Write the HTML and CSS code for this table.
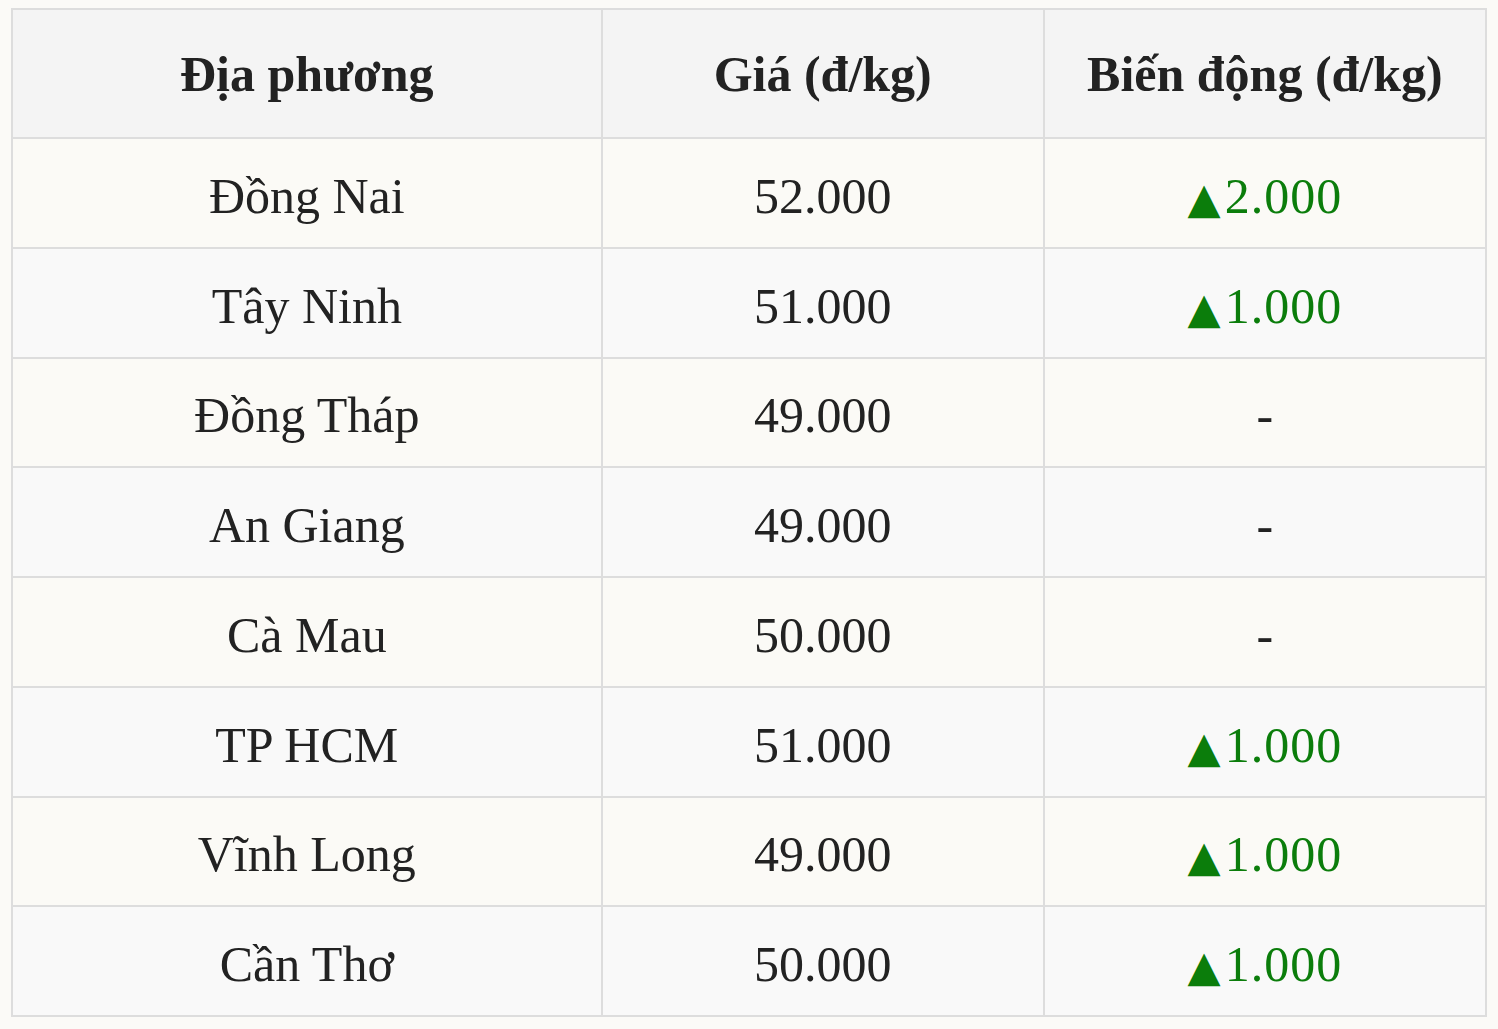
FILE: index.html
```html
<!DOCTYPE html>
<html lang="vi">
<head>
<meta charset="utf-8">
<title>Giá</title>
<link rel="stylesheet" href="styles.css">
</head>
<body>
<table class="price-table">
  <colgroup>
    <col class="col-place">
    <col class="col-price">
    <col class="col-change">
  </colgroup>
  <thead>
    <tr><th>Địa phương</th><th>Giá (đ/kg)</th><th>Biến động (đ/kg)</th></tr>
  </thead>
  <tbody>
    <tr><td>Đồng Nai</td><td>52.000</td><td class="up"><span class="arrow">▲</span>2.000</td></tr>
    <tr><td>Tây Ninh</td><td>51.000</td><td class="up"><span class="arrow">▲</span>1.000</td></tr>
    <tr><td>Đồng Tháp</td><td>49.000</td><td>-</td></tr>
    <tr><td>An Giang</td><td>49.000</td><td>-</td></tr>
    <tr><td>Cà Mau</td><td>50.000</td><td>-</td></tr>
    <tr><td>TP HCM</td><td>51.000</td><td class="up"><span class="arrow">▲</span>1.000</td></tr>
    <tr><td>Vĩnh Long</td><td>49.000</td><td class="up"><span class="arrow">▲</span>1.000</td></tr>
    <tr><td>Cần Thơ</td><td>50.000</td><td class="up"><span class="arrow">▲</span>1.000</td></tr>
  </tbody>
</table>
</body>
</html>
```
FILE: styles.css
```css
html, body {
  margin: 0;
  background: #fbfaf7;
}
body {
  padding: 8px 11px;
  font-family: "Liberation Serif", "Times New Roman", serif;
  color: #222;
}
.price-table {
  width: 1476px;
  border-collapse: collapse;
  table-layout: fixed;
  font-size: 50px;
}
.col-place { width: 40%; }
.col-price { width: 30%; }
.col-change { width: 30%; }
.price-table th,
.price-table td {
  border: 2px solid #dddddd;
  text-align: center;
  vertical-align: middle;
  padding: 0;
}
.price-table th {
  height: 127px;
  background: #f4f4f4;
  font-weight: bold;
}
.price-table td {
  height: 101.75px;
  padding-top: 6px;
}
.price-table tbody tr:nth-child(odd) { background: #fbfaf6; }
.price-table tbody tr:nth-child(even) { background: #f9f9f9; }
.up {
  color: #0b7d0b;
  letter-spacing: 1px;
}
.arrow {
  font-family: "DejaVu Sans", sans-serif;
  font-size: 43px;
  margin-right: 4px;
  letter-spacing: 0;
}
```
